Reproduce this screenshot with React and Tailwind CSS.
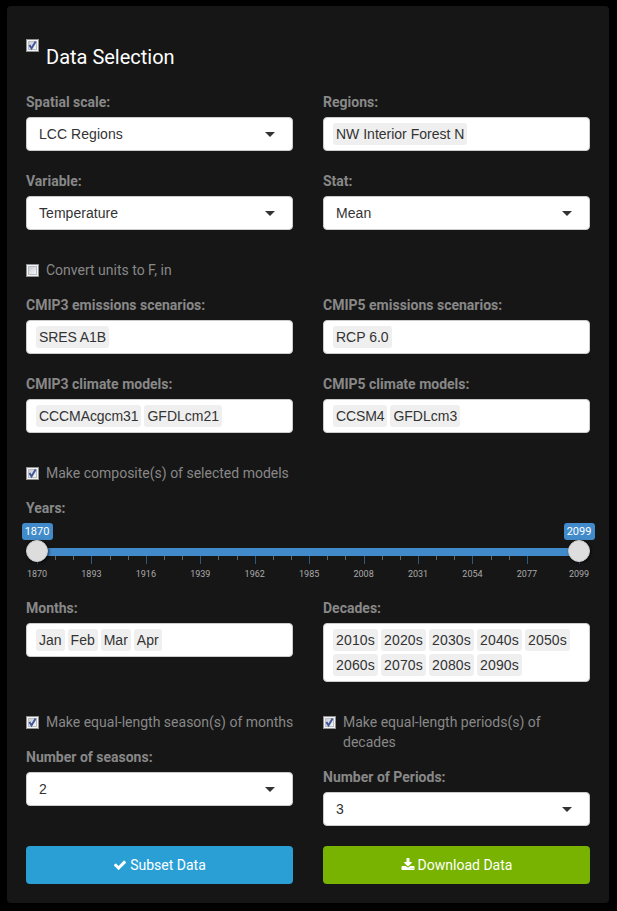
const PCT = 100 / 229;
const MAJOR = [1870, 1893, 1916, 1939, 1962, 1985, 2008, 2031, 2054, 2077, 2099];
const MINOR = MAJOR.slice(0, 9).flatMap((y) => [y + 23 / 3, y + 46 / 3]);

function Box({ checked, className = "mt-1" }) {
  return (
    <svg className={`h-[13px] w-[13px] shrink-0 ${className}`} viewBox="0 0 13 13">
      <defs>
        <linearGradient id="well" x1="0" y1="0" x2="1" y2="1">
          <stop offset="0" stopColor="#c9ccd3" />
          <stop offset="1" stopColor="#f6f6f6" />
        </linearGradient>
      </defs>
      <rect width="13" height="13" fill="#8e8f8f" />
      <rect x="1" y="1" width="11" height="11" fill="#f4f4f4" />
      <rect x="2" y="2" width="9" height="9" fill="#b9bdc4" />
      <rect x="3" y="3" width="7" height="7" fill="url(#well)" />
      {checked && <path d="M3.4 6 L5.5 9.4 L9.6 2.6" fill="none" stroke="#42569b" strokeWidth="2" />}
    </svg>
  );
}

function Check({ children, checked }) {
  return (
    <label className="flex gap-[7px] text-[#888888]">
      <Box checked={checked} />
      <span className="-mr-1">{children}</span>
    </label>
  );
}

function Field({ label, tags, value, className = "h-[79px]", tagClass = "" }) {
  return (
    <div className={className}>
      <div className="mb-[5px] font-bold text-[#888888]">{label}</div>
      <div className="min-h-[34px] rounded-[4px] border border-[#cccccc] bg-white font-['Liberation_Sans',Arial,sans-serif] text-[#333333]">
        {tags ? (
          <div className="flex flex-wrap gap-[3px] py-[5px] pr-2 pl-[9px]">
            {tags.map((t) => (
              <span key={t} className={`h-[22px] rounded-[3px] bg-[#efefef] px-[3px] leading-[22px] whitespace-nowrap ${tagClass}`}>{t}</span>
            ))}
          </div>
        ) : (
          <div className="flex h-8 items-center justify-between pr-[17px] pl-3">
            <span className="tracking-[0.05px]">{value}</span>
            <svg className="h-[5px] w-[10px]" viewBox="0 0 10 5"><path d="M0 0H10L5 5Z" fill="#333333" /></svg>
          </div>
        )}
      </div>
    </div>
  );
}

function Thumb({ year, className }) {
  return (
    <div className={`absolute top-0 flex w-[32px] flex-col items-center ${className}`}>
      <div className="h-[17px] w-[31px] rounded-[3px] bg-[#428bca] text-center text-[11px] leading-[17px] text-white">{year}</div>
      <div className="h-[22px] w-[22px] rounded-full border border-[#cccccc] bg-[#dddddd] shadow-[1px_1px_3px_rgba(0,0,0,0.6)]" />
    </div>
  );
}

function Slider() {
  return (
    <div className="relative mx-[11px] h-[75px]">
      <div className="absolute inset-x-0 top-[25px] h-2 bg-[#428bca]" />
      {MINOR.map((y) => (
        <i key={y} className="absolute top-[33px] h-1 w-px bg-[#666666]" style={{ left: `${(y - 1870) * PCT}%` }} />
      ))}
      {MAJOR.map((y) => (
        <div key={y} className="absolute top-[33px]" style={{ left: `${(y - 1870) * PCT}%` }}>
          <i className="block h-2 w-px bg-[#2d5a82]" />
          <span className="absolute top-[11px] left-0 -translate-x-1/2 text-[9px] leading-[14px] text-[#aaaaaa]">{y}</span>
        </div>
      ))}
      <Thumb year="1870" className="-left-4" />
      <Thumb year="2099" className="-right-4" />
    </div>
  );
}

function Button({ d, children, className }) {
  return (
    <button className={`flex h-[38px] items-center justify-center gap-[3px] rounded-[4px] text-white ${className}`}>
      <svg className="h-[14px] w-[14px]" viewBox="0 0 1792 1792" fill="currentColor"><path d={d} /></svg>
      <span>{children}</span>
    </button>
  );
}

export default function App() {
  return (
    <div className="h-[911px] w-[617px] bg-black pt-[6px] pl-[7px] font-[Roboto,sans-serif] text-[14px] leading-5">
      <main className="h-[897px] w-[602px] rounded-[4px] bg-[#161616] px-[19px] pt-[33px]">
        <div className="flex h-[53px] gap-[7px]">
          <Box checked className="" />
          <h1 className="mt-[6px] text-[20px] leading-6 text-white">Data Selection</h1>
        </div>
        <div className="grid grid-cols-[267px_267px] gap-x-[30px]">
          <Field label="Spatial scale:" value="LCC Regions" />
          <Field label="Regions:" tags={["NW Interior Forest N"]} />
          <Field label="Variable:" value="Temperature" />
          <Field label="Stat:" value="Mean" />
        </div>
        <div className="mt-[10px] h-[35px]"><Check>Convert units to F, in</Check></div>
        <div className="grid grid-cols-[267px_267px] gap-x-[30px]">
          <Field label="CMIP3 emissions scenarios:" tags={["SRES A1B"]} tagClass="tracking-[-0.09px]" />
          <Field label="CMIP5 emissions scenarios:" tags={["RCP 6.0"]} />
          <Field label="CMIP3 climate models:" tags={["CCCMAcgcm31", "GFDLcm21"]} tagClass="first:tracking-[-0.08px]" />
          <Field label="CMIP5 climate models:" tags={["CCSM4", "GFDLcm3"]} tagClass="first:tracking-[-0.12px]" />
        </div>
        <div className="mt-[10px] h-[35px]"><Check checked>Make composite(s) of selected models</Check></div>
        <div className="mb-[5px] font-bold text-[#888888]">Years:</div>
        <Slider />
        <div className="grid grid-cols-[267px_267px] gap-x-[30px]">
          <Field className="h-[114px]" label="Months:" tags={["Jan", "Feb", "Mar", "Apr"]} />
          <Field className="h-[114px]" label="Decades:" tagClass="tracking-[0.17px]" tags={["2010s", "2020s", "2030s", "2040s", "2050s", "2060s", "2070s", "2080s", "2090s"]} />
          <div className="flex h-[134px] flex-col gap-[15px]">
            <Check checked>Make equal-length season(s) of months</Check>
            <Field label="Number of seasons:" value="2" />
          </div>
          <div className="flex h-[134px] flex-col gap-[15px]">
            <Check checked>Make equal-length periods(s) of decades</Check>
            <Field label="Number of Periods:" value="3" />
          </div>
          <Button className="bg-[#2a9fd6]" d="M1671 566q0 40-28 68l-724 724-136 136q-28 28-68 28t-68-28l-136-136-362-362q-28-28-28-68t28-68l136-136q28-28 68-28t68 28l294 295 656-657q28-28 68-28t68 28l136 136q28 28 28 68z">Subset Data</Button>
          <Button className="bg-[#77b300]" d="M1344 1344q0-26-19-45t-45-19-45 19-19 45 19 45 45 19 45-19 19-45zm256 0q0-26-19-45t-45-19-45 19-19 45 19 45 45 19 45-19 19-45zm128-224v320q0 40-28 68t-68 28h-1472q-40 0-68-28t-28-68v-320q0-40 28-68t68-28h465l135 136q58 56 136 56t136-56l136-136h464q40 0 68 28t28 68zm-325-569q17 41-14 70l-448 448q-18 19-45 19t-45-19l-448-448q-31-29-14-70 17-39 59-39h256v-448q0-26 19-45t45-19h256q26 0 45 19t19 45v448h256q42 0 59 39z">Download Data</Button>
        </div>
      </main>
    </div>
  );
}
